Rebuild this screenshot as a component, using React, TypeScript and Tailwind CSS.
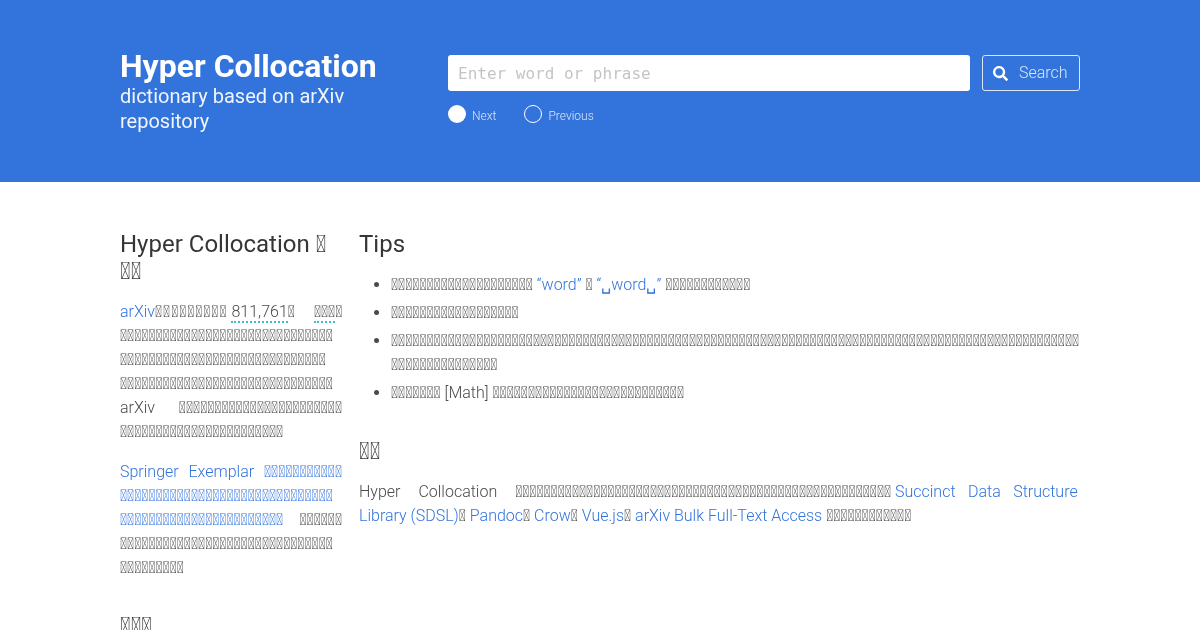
import React from "react";
import { FaSearch } from "react-icons/fa";

const T = (n: number) => "\uE000".repeat(n);
const A = ({ children }: { children: React.ReactNode }) => <a className="text-[#3273dc]">{children}</a>;
const Dotted = ({ children }: { children: React.ReactNode }) => (
  <span className="border-b-2 border-dotted border-[#3dbdc9]">{children}</span>
);
const J = ({ children }: { children: React.ReactNode }) => (
  <div className="text-justify [text-align-last:justify] whitespace-nowrap">{children}</div>
);
const L = ({ children }: { children: React.ReactNode }) => <div className="whitespace-nowrap">{children}</div>;
const Sp = () => <span className="font-['DejaVu_Sans',sans-serif]">␣</span>;

export default function App() {
  return (
    <div className="h-[630px] overflow-hidden bg-white font-['Roboto',sans-serif] font-light text-[16px] leading-6 text-[#4a4a4a]">
      <header className="h-[182px] bg-[#3273dc] text-white">
        <div className="mx-auto flex w-[960px] pt-[47px] will-change-transform">
          <div className="w-[328px]">
            <h1 className="text-[32px] font-bold leading-[38px]">Hyper Collocation</h1>
            <p className="-mt-px w-[260px] text-[20px] font-normal leading-[25px] text-[#f0f5fc]">dictionary based on arXiv repository</p>
          </div>
          <div className="flex-1 pt-2">
            <div className="flex gap-3">
              <input
                placeholder="Enter word or phrase"
                className="h-9 w-[522px] rounded-[3px] bg-white px-[10px] font-['DejaVu_Sans_Mono',monospace] text-base font-light text-[#4a4a4a] outline-none placeholder:text-[#c4c4c4]"
              />
              <button className="flex h-9 flex-1 items-center gap-[11px] rounded-[3px] border border-[#dbe6f8] pl-[10px] text-[#dbe6f8]">
                <FaSearch className="h-[15px] w-[15px] text-white" />
                <span className="font-light">Search</span>
              </button>
            </div>
            <div className="mt-[14px] flex items-start text-[12px] leading-[18px] text-[#dbe6f8]">
              <span className="h-[18px] w-[18px] rounded-full bg-white" />
              <span className="ml-[6px] mr-[28px] pt-[2px]">Next</span>
              <span className="h-[18px] w-[18px] rounded-full border border-white" />
              <span className="ml-[6px] pt-[2px]">Previous</span>
            </div>
          </div>
        </div>
      </header>
      <main className="mx-auto flex w-[960px] gap-[17px] pt-[49px] will-change-transform">
        <aside className="w-[222px] shrink-0">
          <h2 className="text-2xl font-normal leading-[27px] text-[#363636]">
            Hyper Collocation {T(1)}
            <br />
            {T(2)}
          </h2>
          <div className="mt-[15px]">
            <L>
              <A>arXiv</A>
              <span className="tracking-[0.95px]">{T(9)}</span>
              <span className="ml-[4px]">
                <Dotted>811,761</Dotted>
              </span>
              {T(1)}
              <span className="ml-[19px]">
                <Dotted>{T(3)}</Dotted>
              </span>
              {T(1)}
            </L>
            <L>{T(30)}</L>
            <L>{T(29)}</L>
            <L>{T(30)}</L>
            <J>arXiv {T(23)}</J>
            <L>{T(23)}</L>
          </div>
          <div className="mt-4">
            <J>
              <A>Springer Exemplar {T(11)}</A>
            </J>
            <L>
              <A>{T(30)}</A>
            </L>
            <J>
              <A>{T(23)}</A> {T(6)}
            </J>
            <L>{T(30)}</L>
            <L>{T(9)}</L>
          </div>
          <h2 className="mt-[33px] text-2xl font-normal leading-[27px] text-[#363636]">{T(3)}</h2>
        </aside>
        <section className="w-[721px]">
          <h2 className="text-2xl font-normal leading-[27px] text-[#363636]">Tips</h2>
          <ul className="mt-[15px] list-disc pl-8">
            <li className="mb-1">
              {T(20)} <A>“word”</A> {T(1)}{" "}
              <A>
                “<Sp />word<Sp />”
              </A>{" "}
              {T(12)}
            </li>
            <li className="mb-1">{T(18)}</li>
            <li className="mb-1">
              <L>{T(97)}</L>
              <L>{T(15)}</L>
            </li>
            <li>
              {T(7)} [Math] {T(27)}
            </li>
          </ul>
          <h2 className="mt-[33px] text-2xl font-normal leading-[27px] text-[#363636]">{T(2)}</h2>
          <div className="mt-[15px]">
            <L>
              <span className="[word-spacing:14px]">Hyper Collocation </span>
              {T(53)}{" "}
              <span className="[word-spacing:8.5px]">
                <A>Succinct Data Structure</A>
              </span>
            </L>
            <L>
              <A>Library (SDSL)</A>
              {T(1)} <A>Pandoc</A>
              {T(1)} <A>Crow</A>
              {T(1)} <A>Vue.js</A>
              {T(1)} <A>arXiv Bulk Full-Text Access</A> {T(12)}
            </L>
          </div>
        </section>
      </main>
    </div>
  );
}
